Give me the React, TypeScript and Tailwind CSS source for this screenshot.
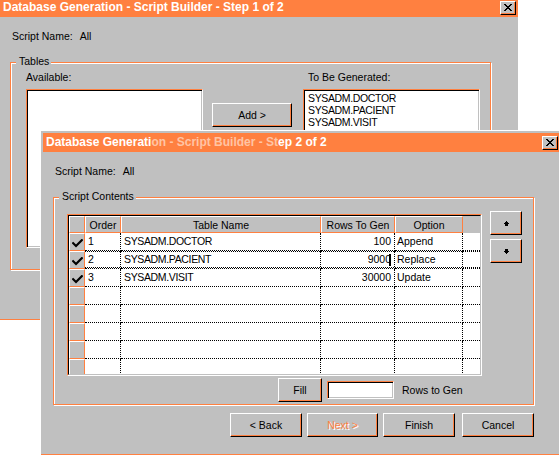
import React from "react";

const raised =
  "bg-[#c0c0c0] border-t border-l border-t-white border-l-white border-b border-r border-b-black border-r-black shadow-[inset_-1px_-1px_0_#ff8040]";
const sunken =
  "border-t border-l border-t-[#ff8040] border-l-[#ff8040] border-b border-r border-b-white border-r-white shadow-[inset_1px_1px_0_#000,inset_-1px_-1px_0_#c0c0c0]";

function Button({ className = "", children }: { className?: string; children?: React.ReactNode }) {
  return <div className={`${raised} flex items-center justify-center whitespace-nowrap ${className}`}>{children}</div>;
}

function CloseBtn({ className = "" }: { className?: string }) {
  return (
    <div className={`${raised} w-[16px] h-[14px] flex items-center justify-center shrink-0 ${className}`}>
      <svg width="8" height="7" viewBox="0 0 8 7" shapeRendering="crispEdges" className="-mt-[1px]">
        <path
          d="M0 0h2v1H0zM6 0h2v1H6zM1 1h2v1H1zM5 1h2v1H5zM2 2h4v1H2zM3 3h2v1H3zM2 4h4v1H2zM1 5h2v1H1zM5 5h2v1H5zM0 6h2v1H0zM6 6h2v1H6z"
          fill="#000"
        />
      </svg>
    </div>
  );
}

function GroupBox({ legend, className = "", children }: { legend: string; className?: string; children?: React.ReactNode }) {
  return (
    <div className={`relative w-[481px] h-[208px] shrink-0 border border-[#ff8040] shadow-[inset_1px_1px_0_#fff,1px_1px_0_#fff] ${className}`}>
      <span className="absolute -top-[8px] left-[5px] bg-[#c0c0c0] pl-[3px] pr-[2px] leading-[13px] whitespace-nowrap">
        {legend}
      </span>
      {children}
    </div>
  );
}

function Check() {
  return (
    <svg width="11" height="9" viewBox="0 0 11 9">
      <path d="M1.2 4.2 L4 7 L9.8 1.2" stroke="#000" strokeWidth="2.2" fill="none" strokeLinecap="square" />
    </svg>
  );
}

function Arrow({ down = false }: { down?: boolean }) {
  return (
    <svg width="5" height="5" viewBox="0 0 5 5" shapeRendering="crispEdges" className={down ? "rotate-180" : ""}>
      <path d="M2 0h1v1H2zM1 1h3v1H1zM0 2h5v1H0zM1 3h3v2H1z" fill="#000" />
    </svg>
  );
}

type Row = { order: string; name: string; rows: string; opt: string; focus?: boolean; caret?: boolean };

const data: Row[] = [
  { order: "1", name: "SYSADM.DOCTOR", rows: "100", opt: "Append" },
  { order: "2", name: "SYSADM.PACIENT", rows: "9000", opt: "Replace", focus: true, caret: true },
  { order: "3", name: "SYSADM.VISIT", rows: "30000", opt: "Update" },
  { order: "", name: "", rows: "", opt: "" },
  { order: "", name: "", rows: "", opt: "" },
  { order: "", name: "", rows: "", opt: "" },
  { order: "", name: "", rows: "", opt: "" },
  { order: "", name: "", rows: "", opt: "" },
];

const hdr =
  "flex items-center justify-center pt-[1px] border-t border-l border-t-white border-l-white border-b border-r border-b-[#ff8040] border-r-[#ff8040] whitespace-nowrap";
const cell = "flex items-center border-r border-b border-dotted border-black whitespace-nowrap overflow-hidden";

function Grid() {
  return (
    <div className="w-[415px] h-[162px] shrink-0 border-t border-l border-t-[#ff8040] border-l-[#ff8040] border-b border-r border-b-white border-r-white">
      <div className="h-full border-t border-l border-t-black border-l-black border-b border-r border-b-[#c0c0c0] border-r-[#c0c0c0] bg-white overflow-hidden">
        <div className="flex h-[17px] bg-[#c0c0c0]">
          <div className={`${hdr} w-[16px]`} />
          <div className={`${hdr} w-[36px]`}>Order</div>
          <div className={`${hdr} w-[200px]`}>Table Name</div>
          <div className={`${hdr} w-[74px]`}>Rows To Gen</div>
          <div className={`${hdr} w-[68px]`}>Option</div>
          <div className="w-[17px]" />
        </div>
        {data.map((r, i) => (
          <div key={i} className="flex h-[18px] shrink-0">
            <div className="w-[16px] shrink-0 flex items-center justify-center pt-[2px] bg-[#c0c0c0] border-t border-l border-t-white border-l-white border-b border-r border-b-[#ff8040] border-r-[#ff8040]">
              {r.order ? <Check /> : null}
            </div>
            <div className="relative flex">
              <div className={`${cell} w-[36px] pl-[3px]`}>{r.order}</div>
              <div className={`${cell} w-[200px] pl-[3px] tracking-[-0.35px]`}>{r.name}</div>
              <div className={`${cell} w-[74px] pr-[3px] justify-end`}>
                {r.rows}
                {r.caret ? <span className="inline-block w-[2px] h-[12px] bg-black -ml-[2px]" /> : null}
              </div>
              <div className={`${cell} w-[68px] pl-[2px]`}>{r.opt}</div>
              <div className="w-[17px] border-b border-dotted border-black" />
              {r.focus ? (
                <div className="absolute left-0 right-0 top-0 h-[17px] border-y border-dotted border-black pointer-events-none" />
              ) : null}
            </div>
          </div>
        ))}
      </div>
    </div>
  );
}

function Window1() {
  return (
    <div className="absolute left-0 top-0 w-[518px] h-[320px] bg-[#c0c0c0] border-b border-b-[#ff8040]">
      <div className="h-[17px] bg-[#ff8040] flex justify-between items-start">
        <span className="pl-[3px] text-white font-bold text-[12px] leading-[15px] whitespace-nowrap">
          Database Generation - Script Builder - Step 1 of 2
        </span>
        <CloseBtn className="mt-[1px] mr-[2px]" />
      </div>
      <div className="pl-[12px] mt-[13px] whitespace-nowrap">
        Script Name:<span className="ml-[7px]">All</span>
      </div>
      <GroupBox legend="Tables" className="ml-[10px] mt-[19px]">
        <div className="flex items-start">
          <div className="ml-[15px] mt-[8px] flex flex-col">
            <div className="whitespace-nowrap">Available:</div>
            <div className={`${sunken} mt-[5px] w-[177px] h-[159px] bg-white`} />
          </div>
          <Button className="ml-[9px] mt-[40px] w-[80px] h-[24px]">Add &gt;</Button>
          <div className="ml-[11px] mt-[8px] flex flex-col">
            <div className="pl-[5px] whitespace-nowrap">To Be Generated:</div>
            <div className={`${sunken} mt-[5px] w-[177px] h-[159px] bg-white pl-[4px] pt-[2px] leading-[12px] tracking-[-0.35px]`}>
              <div>SYSADM.DOCTOR</div>
              <div>SYSADM.PACIENT</div>
              <div>SYSADM.VISIT</div>
            </div>
          </div>
        </div>
      </GroupBox>
    </div>
  );
}

function Window2() {
  return (
    <div className="absolute left-[40px] top-[130px] w-[522px] h-[326px] bg-[#c0c0c0] border-t border-l border-t-white border-l-white border-b border-b-black shadow-[inset_0_-1px_0_#ff8040] p-[2px]">
      <div className="h-[19px] bg-[#ff8040] flex justify-between items-start">
        <span className="pl-[3px] text-white font-bold text-[12px] leading-[19px] whitespace-nowrap">
          Database Generati<span className="text-[#ffc4a4]">on - Script Builder - St</span>ep 2 of 2
        </span>
        <CloseBtn className="mt-[3px] mr-[2px]" />
      </div>
      <div className="pl-[12px] mt-[13px] whitespace-nowrap">
        Script Name:<span className="ml-[7px]">All</span>
      </div>
      <GroupBox legend="Script Contents" className="ml-[10px] mt-[19px]">
        <div className="flex items-start mt-[13px]">
          <div className="ml-[13px] mt-[3px]">
            <Grid />
          </div>
          <div className="ml-[8px] flex flex-col gap-[4px]">
            <Button className="w-[32px] h-[24px]">
              <Arrow />
            </Button>
            <Button className="w-[32px] h-[24px]">
              <Arrow down />
            </Button>
          </div>
        </div>
        <div className="flex items-center mt-[2px]">
          <Button className="ml-[224px] w-[44px] h-[24px]">Fill</Button>
          <div className={`${sunken} ml-[5px] w-[67px] h-[18px] bg-white`} />
          <span className="ml-[8px] whitespace-nowrap">Rows to Gen</span>
        </div>
      </GroupBox>
      <div className="flex mt-[8px] ml-[187px]">
        <Button className="w-[72px] h-[24px]">&lt; Back</Button>
        <Button className="ml-[5px] w-[71px] h-[24px] text-[#ff8040] [text-shadow:1px_1px_0_#fff]">Next &gt;</Button>
        <Button className="ml-[5px] w-[72px] h-[24px]">Finish</Button>
        <Button className="ml-[7px] w-[72px] h-[24px]">Cancel</Button>
      </div>
    </div>
  );
}

export default function App() {
  return (
    <div className="relative w-[559px] h-[455px] overflow-hidden bg-white font-['Liberation_Sans',Arial,sans-serif] text-[10.5px] leading-[13px] text-black">
      <Window1 />
      <Window2 />
    </div>
  );
}
